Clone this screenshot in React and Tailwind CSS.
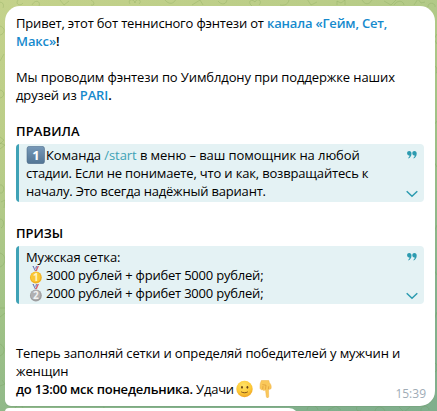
function Doodles() {
  return (
    <svg
      className="absolute inset-0 h-full w-full"
      viewBox="0 0 437 411"
      fill="none"
      stroke="#68913f"
      strokeOpacity="0.2"
      strokeWidth="1"
    >
      <path d="M-2 4c3-4 7 0 5 4M18 0c-3 4 2 7 5 3M32 5c3-6 9-4 7 1-1 3-6 4-8 0M60 0l4 5 5-4M90-1c5 3 5 7 1 6" />
      <path d="M130 4c-3-5 4-6 5-1 1-6 8-3 4 1M165 0c4 5 9 4 11-1M192 5l8-5 3 5M218 1c4 5 9 3 9-2" />
      <path d="M252 6c-5-4-1-8 3-4 2-5 8-1 4 3M280 5c6 1 9-2 9-6M307-1l4 6 6-3M337 5v-4l4 2 4-3v5M362 0c3 5 7 5 10 0" />
      <path d="M384 1l7 4 6-6M394 5c3-5 9-5 10 0M414 5l4-6 3 4 4-1M428 7c0-6 8-4 7 0" />
      <path d="M0 26c6 2 5 8 0 9M4 54l-4 7M0 90c5 1 5 7 0 8M0 137l4 3-4 4M0 143l5 2-5 4M0 185c5-1 5 9 0 8M1 202l4-2-1 8M0 219c5 0 4 8 1 9M0 253c7 2 6 12 0 14M0 308h5M0 317l5-4M0 344c6 3 5 10 0 12M2 380l3 4-5 2" />
      <path d="M437 34l-3 5 3 5M434 66c4 0 3 8 2 7M437 121l-3 4M434 162l3 5M437 225l-3 7M434 270l3 5M437 312l-3 8M435 363c3 1 3 8 0 9" />
      <path d="M15 408c2-4 7-4 8 0M103 407l5 3M307 410c0-6 10-6 11 0M328 410l8-4 5 4M357 407c-2 3 2 5 4 4M375 411c1-6 8-5 10 0M399 407l5 5 6-5M421 411c-1-6 8-6 8-1" />
    </svg>
  );
}

function Quote({ children }) {
  return (
    <div className="flex h-[58px] overflow-hidden rounded-[4px] bg-[#e4f2f4]">
      <div className="w-[3px] bg-[#3fa2b6]" />
      <div className="grow pt-[2px] pl-[7px]">{children}</div>
      <div className="flex w-[24px] flex-col items-center justify-between pt-[7px] pb-[4px]">
        <svg width="10" height="8" viewBox="0 0 10 8" fill="#2c9bb0">
          <path d="M2.2 0C3.7 0 4.5 1 4.5 2.6 4.5 5 3.3 6.8 1.5 7.6L1.1 6.8C2 6.2 2.5 5.4 2.5 4.4H2.1C.8 4.4.1 3.5.1 2.3.1.9 1 0 2.2 0ZM7.4 0C8.9 0 9.7 1 9.7 2.6 9.7 5 8.5 6.8 6.7 7.6L6.3 6.8C7.2 6.2 7.7 5.4 7.7 4.4H7.3C6 4.4 5.3 3.5 5.3 2.3 5.3.9 6.2 0 7.4 0Z" />
        </svg>
        <svg width="12" height="8" viewBox="0 0 12 8" fill="none" stroke="#2c9bb0" strokeWidth="1.5">
          <path d="M.7 1.2 6 6.3 11.3 1.2" />
        </svg>
      </div>
    </div>
  );
}

function KeycapOne() {
  return (
    <svg className="mr-[1px] inline-block shrink-0" width="19" height="18" viewBox="0 0 19 18">
      <defs>
        <linearGradient id="key" x1="0" y1="0" x2="0" y2="1">
          <stop offset="0" stopColor="#7799b8" />
          <stop offset="1" stopColor="#527594" />
        </linearGradient>
      </defs>
      <rect x="1" y="0.3" width="17.5" height="17.4" rx="2.5" fill="url(#key)" stroke="#536f8b" strokeWidth=".6" />
      <text x="9.9" y="13.5" textAnchor="middle" fill="#fff" fontSize="13" fontWeight="700" fontFamily="Open Sans, sans-serif">
        1
      </text>
    </svg>
  );
}

function Medal({ place }) {
  const gold = place === 1;
  return (
    <svg className="mr-[1px] inline-block shrink-0" width="19" height="18" viewBox="0 0 19 18">
      <path d="M6.4 0 8.9 5h1.6L8 0Z" fill="#6c78b4" />
      <path d="M7.8 0h1.4l1.3 3.4-1 1.2Z" fill="#eee" />
      <path d="M13 0 10.8 5H9.2L11.5 0Z" fill="#de6069" />
      <path d="M10 0h1.4L9.9 3.4 9.2 2Z" fill="#7a88c2" />
      <circle cx="9.9" cy="11.5" r="5.9" fill={gold ? "#f0b021" : "#9d9d9f"} />
      <circle cx="9.6" cy="11" r="4.9" fill={gold ? "#fac733" : "#b0b0b2"} />
      <text x="9.8" y="14.8" textAnchor="middle" fill={gold ? "#fff5c4" : "#f1f1f1"} fontSize="10" fontWeight="700" fontFamily="Open Sans, sans-serif">
        {place}
      </text>
    </svg>
  );
}

function Smile() {
  return (
    <svg className="mr-[6px] ml-[2px] inline-block shrink-0" width="17" height="18" viewBox="0 0 17 18">
      <defs>
        <radialGradient id="face" cx="45%" cy="30%" r="70%">
          <stop offset="0" stopColor="#ffe36a" />
          <stop offset=".65" stopColor="#fdc936" />
          <stop offset="1" stopColor="#eea426" />
        </radialGradient>
      </defs>
      <circle cx="8.5" cy="9" r="8.2" fill="url(#face)" />
      <ellipse cx="6" cy="7.3" rx=".9" ry="1.4" fill="#694318" />
      <ellipse cx="11.4" cy="7.3" rx=".9" ry="1.4" fill="#694318" />
      <path d="M5.2 11.8c2 1.3 4.6 1.3 6.6 0" fill="none" stroke="#805019" strokeWidth="1" />
    </svg>
  );
}

function PointDown() {
  return (
    <svg className="inline-block shrink-0" width="13" height="18" viewBox="0 0 13 18">
      <path
        d="M2.4.5h7.4l.6 2.3c1.3 1.2 1.9 2.8 1.8 4.6 0 1.6-1.2 2.3-2.2 1.8l-.5.2.2 7c0 1.7-2.3 1.7-2.4 0l-.8-6.6c-1.2.9-2.3.7-2.8 0C2 9.9.9 9 1 7.6L1.2 3.8Z"
        fill="#fac85a"
        stroke="#efb044"
        strokeWidth=".5"
      />
      <path d="M3.7 9.2 4 6.1M6.5 9.5 7 5.2 3.4 4.6M9.4 9.3l.3-3" fill="none" stroke="#dc9a35" strokeWidth=".7" />
    </svg>
  );
}

function Line({ className = "", children }) {
  return <div className={`flex h-[18px] whitespace-pre leading-[18px] ${className}`}>{children}</div>;
}

export default function App() {
  return (
    <div className="relative h-[411px] w-[437px] overflow-hidden bg-linear-[155deg,#c4d28b_0%,#bacd88_25%,#a0c286_52%,#83b18b_80%,#80af8d_100%] font-['Open_Sans','Noto_Sans',sans-serif] text-[13px] text-black">
      <Doodles />
      <div className="relative flex h-full flex-col gap-[2px] pt-[6px] pl-[5px]">
        <div className="h-[400px] w-[430px] shrink-0 rounded-[15px] rounded-bl-[6px] bg-white pt-[8px] pr-[11px] pl-[11px] shadow-[0_1px_0_#719b7666]">
          <Line className="tracking-[-0.18px]">
            Привет, этот бот теннисного фэнтези от <b className="font-semibold text-[#168acd]">канала «Гейм, Сет,</b>
          </Line>
          <Line className="font-semibold tracking-[-0.1px]">
            <span className="text-[#168acd]">Макс»</span>!
          </Line>
          <Line className="mt-[18px] tracking-[-0.11px]">Мы проводим фэнтези по Уимблдону при поддержке наших</Line>
          <Line className="tracking-[-0.13px]">
            друзей из <b className="font-semibold text-[#168acd]">PARI</b>
            <b className="font-semibold">.</b>
          </Line>
          <Line className="mt-[18px] mb-[4px] font-semibold tracking-[0.1px]">ПРАВИЛА</Line>
          <Quote>
            <Line className="tracking-[-0.07px]">
              <KeycapOne />
              Команда <span className="text-[#3fa2b6]">/start</span> в меню – ваш помощник на любой
            </Line>
            <Line className="tracking-[-0.17px]">стадии. Если не понимаете, что и как, возвращайтесь к</Line>
            <Line className="tracking-[-0.2px]">началу. Это всегда надёжный вариант.</Line>
          </Quote>
          <Line className="mt-[22px] mb-[4px] font-semibold">ПРИЗЫ</Line>
          <Quote>
            <Line className="tracking-[-0.08px]">Мужская сетка:</Line>
            <Line className="tracking-[-0.21px]">
              <Medal place={1} />
              3000 рублей + фрибет 5000 рублей;
            </Line>
            <Line className="tracking-[-0.21px]">
              <Medal place={2} />
              2000 рублей + фрибет 3000 рублей;
            </Line>
          </Quote>
          <Line className="mt-[40px] tracking-[-0.15px]">Теперь заполняй сетки и определяй победителей у мужчин и</Line>
          <Line className="tracking-[-0.15px]">женщин</Line>
          <div className="flex justify-between">
            <Line className="tracking-[-0.22px]">
              <b className="font-semibold">до 13:00 мск понедельника.</b> Удачи
              <Smile />
              <PointDown />
            </Line>
            <time className="mt-[5px] -mr-[2px] text-[12px] leading-[18px] text-[#a0acb6]">15:39</time>
          </div>
        </div>
        <div className="h-[20px] w-[294px] shrink-0 rounded-[15px] rounded-tl-[6px] bg-white" />
      </div>
    </div>
  );
}
